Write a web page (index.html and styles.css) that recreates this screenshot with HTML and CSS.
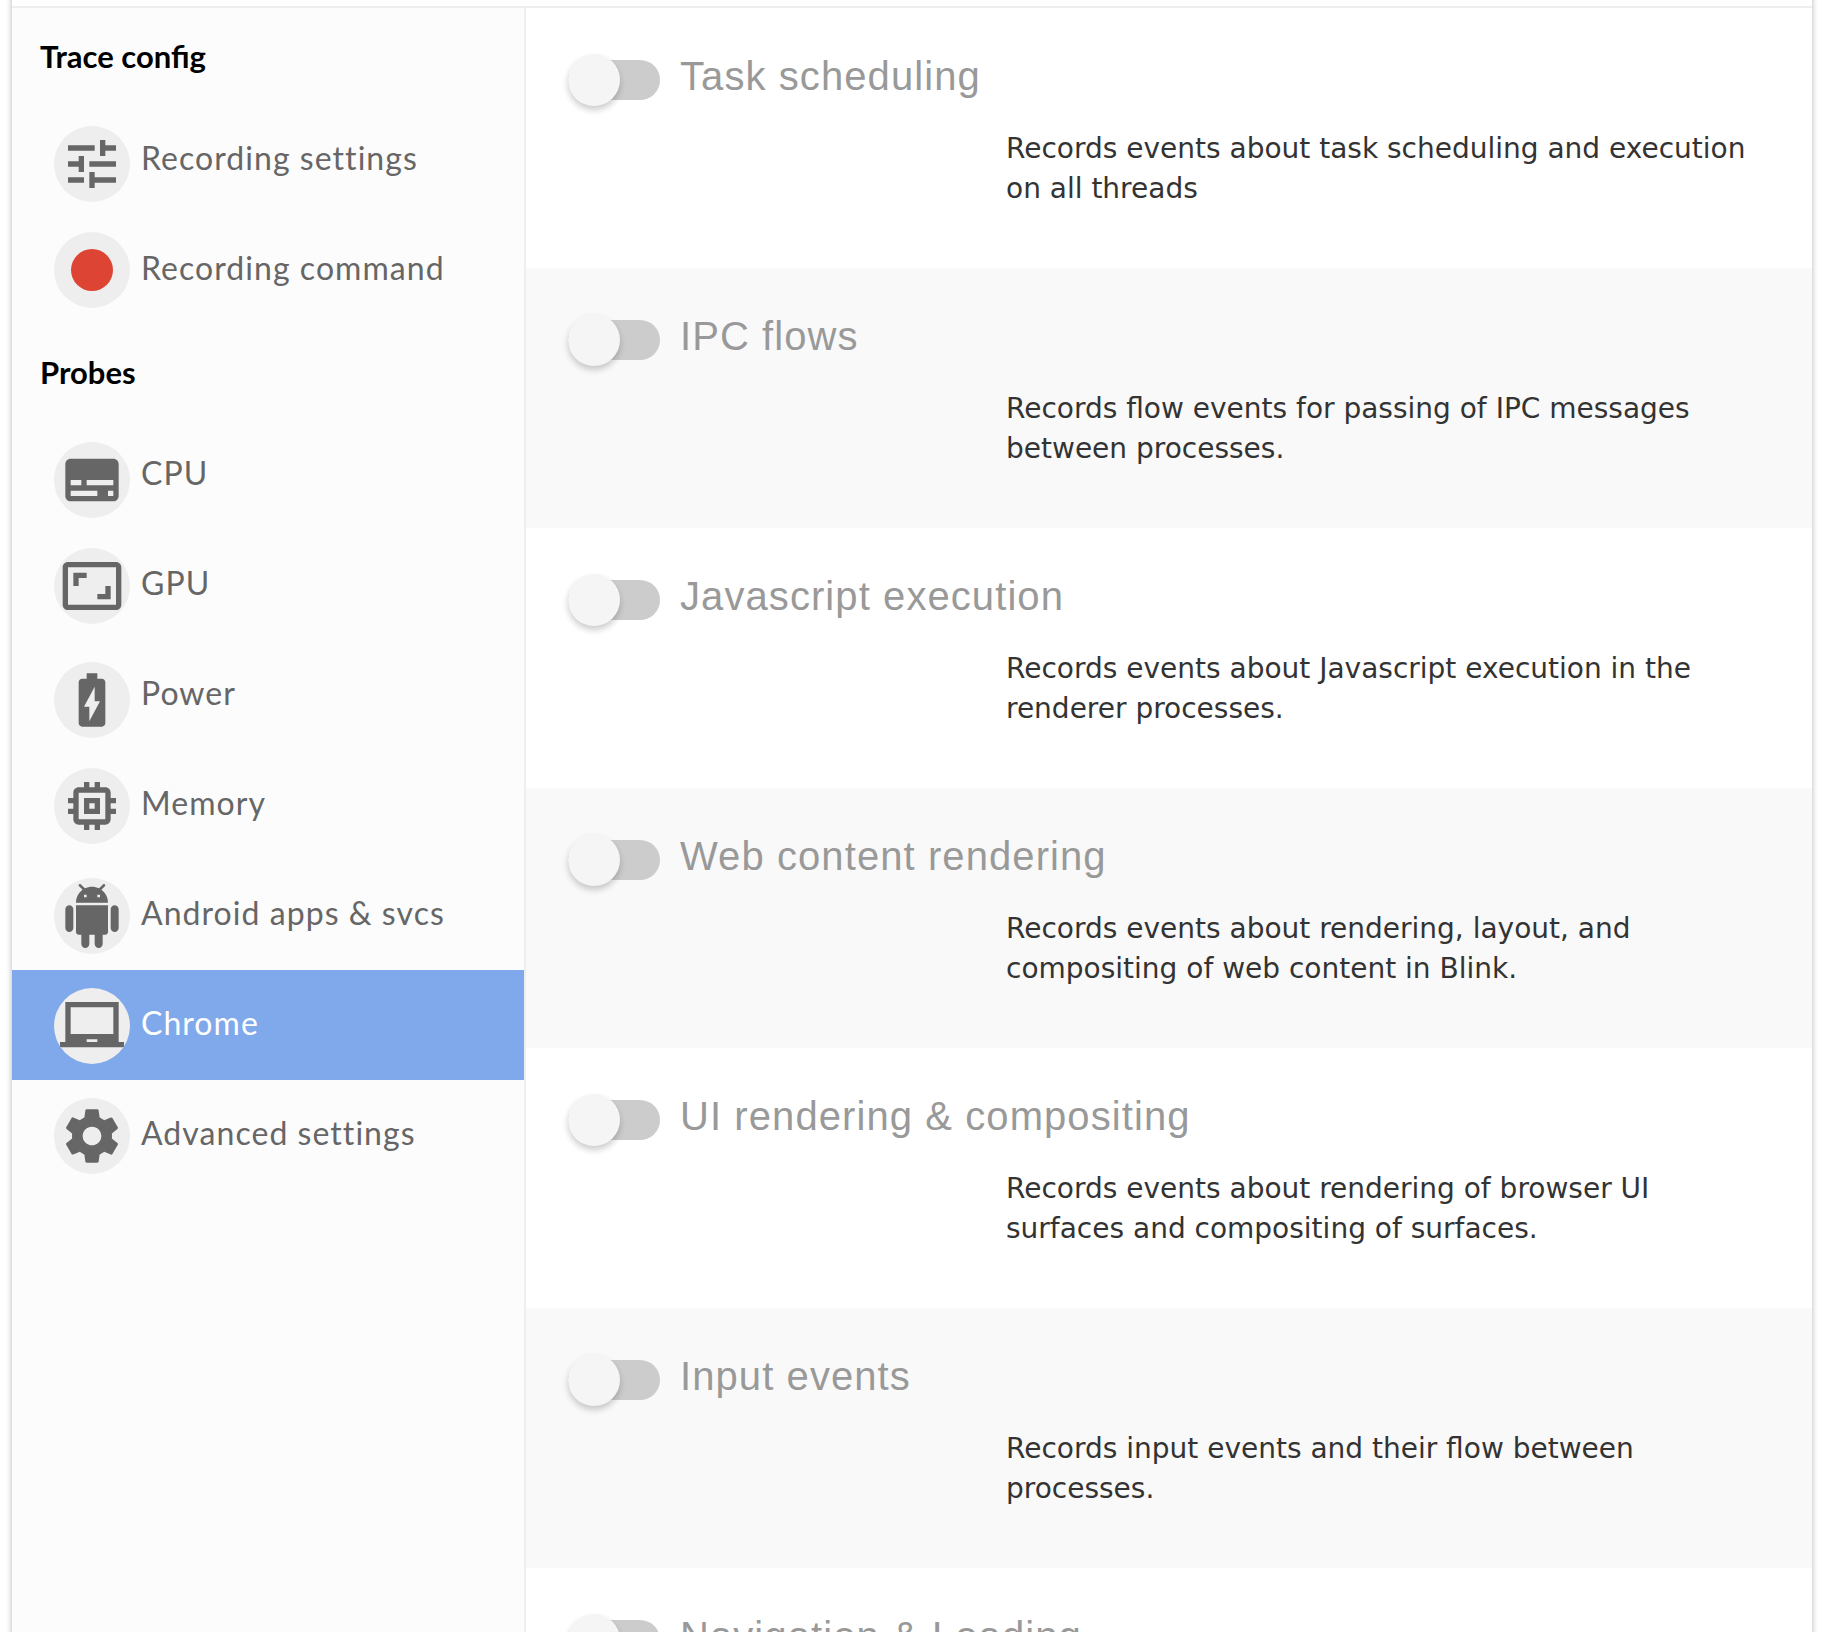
FILE: index.html
```html
<!DOCTYPE html>
<html lang="en">
<head>
<meta charset="utf-8">
<title>Trace config</title>
<link rel="stylesheet" href="styles.css">
</head>
<body>
<div class="page">
<div class="frame">
  <nav class="sidebar">
    <h2 class="heading first">Trace config</h2>
    <a class="item"><span class="badge up-1"><svg viewBox="0 0 24 24"><path d="M3 17v2h6v-2H3zM3 5v2h10V5H3zm10 16v-2h8v-2h-8v-2h-2v6h2zM7 9v2H3v2h4v2h2V9H7zm14 4v-2H11v2h10zm-6-4h2V7h4V5h-4V3h-2v6z"/></svg></span><span class="label">Recording settings</span></a>
    <a class="item"><span class="badge up-2"><span class="rec"></span></span><span class="label">Recording command</span></a>
    <h2 class="heading">Probes</h2>
    <a class="item"><span class="badge"><svg viewBox="0 0 24 24"><path d="M20 4H4c-1.100 0-2 .9-2 2v12c0 1.100.9 2 2 2h16c1.100 0 2-.9 2-2V6c0-1.100-.9-2-2-2zM4 12h4v2H4v-2zm10 6H4v-2h10v2zm6 0h-2v-2h2v2zm0-4H10v-2h10v2z"/></svg></span><span class="label">CPU</span></a>
    <a class="item"><span class="badge up"><svg viewBox="0 0 24 24"><path d="M19 12h-2v3h-3v2h5v-5zM7 9h3V7H5v5h2V9zm14-6H3c-1.100 0-2 .9-2 2v14c0 1.100.9 2 2 2h18c1.100 0 2-.9 2-2V5c0-1.100-.9-2-2-2zm0 16.010H3V4.990h18v14.020z"/></svg></span><span class="label">GPU</span></a>
    <a class="item"><span class="badge"><svg viewBox="0 0 24 24"><path d="M15.670 4H14V2h-4v2H8.330C7.600 4 7 4.600 7 5.330v15.330C7 21.400 7.600 22 8.330 22h7.330c.74 0 1.340-.6 1.340-1.330V5.330C17 4.600 16.400 4 15.670 4zM11 20v-5.500H9L13 7v5.500h2L11 20z"/></svg></span><span class="label">Power</span></a>
    <a class="item"><span class="badge up"><svg viewBox="0 0 24 24"><path d="M15 9H9v6h6V9zm-2 4h-2v-2h2v2zm8-2V9h-2V7c0-1.100-.9-2-2-2h-2V3h-2v2h-2V3H9v2H7c-1.100 0-2 .9-2 2v2H3v2h2v2H3v2h2v2c0 1.100.9 2 2 2h2v2h2v-2h2v2h2v-2h2c1.100 0 2-.9 2-2v-2h2v-2h-2v-2h2zm-4 6H7V7h10v10z"/></svg></span><span class="label">Memory</span></a>
    <a class="item"><span class="badge up"><svg viewBox="0 0 24 24"><path d="M6 18c0 .55.45 1 1 1h1v3.500c0 .83.67 1.500 1.500 1.500s1.500-.67 1.500-1.500V19h2v3.500c0 .83.67 1.500 1.500 1.500s1.500-.67 1.500-1.500V19h1c.55 0 1-.45 1-1V8H6v10zM3.500 8C2.670 8 2 8.670 2 9.500v7c0 .83.67 1.500 1.500 1.500S5 17.330 5 16.500v-7C5 8.670 4.330 8 3.500 8zm17 0c-.83 0-1.500.67-1.500 1.500v7c0 .83.67 1.500 1.500 1.500s1.500-.67 1.500-1.500v-7c0-.83-.67-1.500-1.500-1.500zm-4.970-5.840l1.300-1.300c.2-.2.2-.51 0-.71-.2-.2-.51-.2-.71 0l-1.480 1.480C13.850 1.230 12.950 1 12 1c-.96 0-1.860.23-2.660.63L7.850.15c-.2-.2-.51-.2-.71 0-.2.2-.2.51 0 .71l1.310 1.310C6.970 3.260 6 5.010 6 7h12c0-1.990-.97-3.750-2.470-4.840zM10 5H9V4h1v1zm5 0h-1V4h1v1z"/></svg></span><span class="label">Android apps &amp; svcs</span></a>
    <a class="item active"><span class="badge up"><svg viewBox="0 0 24 24"><path d="M22 18V3H2v15H0v2h24v-2h-2zm-8 0h-4v-1h4v1zm6-3H4V5h16v10z"/></svg></span><span class="label">Chrome</span></a>
    <a class="item"><span class="badge up"><svg viewBox="0 0 24 24"><path d="M19.430 12.980c.04-.32.07-.64.07-.98s-.03-.66-.07-.98l2.110-1.650c.19-.15.24-.42.12-.64l-2-3.460c-.12-.22-.39-.3-.61-.22l-2.490 1c-.52-.4-1.080-.73-1.690-.98l-.38-2.650C14.460 2.180 14.250 2 14 2h-4c-.25 0-.46.18-.49.42l-.38 2.650c-.61.25-1.170.59-1.690.98l-2.490-1c-.23-.09-.49 0-.61.22l-2 3.460c-.13.22-.07.49.12.64l2.110 1.650c-.04.32-.07.65-.07.98s.03.66.07.98l-2.110 1.650c-.19.15-.24.42-.12.64l2 3.460c.12.22.39.3.61.22l2.490-1c.52.4 1.080.73 1.690.98l.38 2.650c.03.24.24.42.49.42h4c.25 0 .46-.18.49-.42l.38-2.650c.61-.25 1.170-.59 1.690-.98l2.490 1c.23.09.49 0 .61-.22l2-3.460c.12-.22.07-.49-.12-.64l-2.110-1.650zM12 15.500c-1.930 0-3.500-1.570-3.500-3.500s1.570-3.500 3.500-3.500 3.500 1.570 3.500 3.500-1.570 3.500-3.500 3.500z"/></svg></span><span class="label">Advanced settings</span></a>
  </nav>
  <main class="main">
    <section class="probe">
      <div class="head"><span class="toggle"><span class="knob"></span></span><span class="title">Task scheduling</span></div>
      <p class="desc">Records events about task scheduling and execution on all threads</p>
    </section>
    <section class="probe">
      <div class="head"><span class="toggle"><span class="knob"></span></span><span class="title">IPC flows</span></div>
      <p class="desc">Records flow events for passing of IPC messages between processes.</p>
    </section>
    <section class="probe">
      <div class="head"><span class="toggle"><span class="knob"></span></span><span class="title">Javascript execution</span></div>
      <p class="desc">Records events about Javascript execution in the renderer processes.</p>
    </section>
    <section class="probe">
      <div class="head"><span class="toggle"><span class="knob"></span></span><span class="title">Web content rendering</span></div>
      <p class="desc">Records events about rendering, layout, and compositing of web content in Blink.</p>
    </section>
    <section class="probe">
      <div class="head"><span class="toggle"><span class="knob"></span></span><span class="title">UI rendering &amp; compositing</span></div>
      <p class="desc">Records events about rendering of browser UI surfaces and compositing of surfaces.</p>
    </section>
    <section class="probe">
      <div class="head"><span class="toggle"><span class="knob"></span></span><span class="title">Input events</span></div>
      <p class="desc">Records input events and their flow between processes.</p>
    </section>
    <section class="probe">
      <div class="head"><span class="toggle"><span class="knob"></span></span><span class="title">Navigation &amp; Loading</span></div>
    </section>
  </main>
</div>
</div>
</body>
</html>
```
FILE: styles.css
```css
* { box-sizing: border-box; }
html, body { margin: 0; height: 100%; overflow: hidden; background: #fff; }
.page {
  width: 1800px;
  height: 1660px;
  margin: -14px 0 0 12px;
  padding-top: 20px;
  background: #fff;
  box-shadow: 0 0 6px rgba(0, 0, 0, .3);
}
.frame {
  display: flex;
  height: 1640px;
  border-top: 2px solid #eee;
  overflow: hidden;
}
.sidebar {
  flex: 0 0 514px;
  background: #fcfcfc;
  border-right: 2px solid #eee;
  padding-top: 28px;
}
.heading {
  margin: 27px 0 28px;
  padding-left: 28px;
  font: 700 31px/40px Lato, sans-serif;
  color: #000;
}
.heading.first { margin: 0 0 29px; }
.item {
  display: flex;
  align-items: flex-start;
  height: 110px;
  padding-left: 42px;
}
.badge {
  flex: none;
  display: flex;
  align-items: center;
  justify-content: center;
  width: 76px;
  height: 76px;
  margin-top: 22px;
  border-radius: 50%;
  background: #eee;
  overflow: hidden;
}
.badge.up { margin-top: 18px; }
.badge.up-1 { margin-top: 21px; }
.badge.up-2 { margin-top: 17px; }
.badge svg { flex: none; width: 64px; height: 64px; fill: #666; }
.rec { width: 42px; height: 42px; border-radius: 50%; background: #dd4433; }
.label {
  margin: 33px 0 0 11px;
  font: 400 32px/40px Lato, sans-serif;
  letter-spacing: 1.05px;
  color: #666;
  white-space: nowrap;
}
.item.active { background: #7fa9eb; }
.item.active .label { color: #fff; }
.main { flex: 1; min-width: 0; }
.probe { height: 260px; padding: 46px 40px 0 42px; }
.probe:nth-child(even) { background: #f9f9f9; }
.head { display: flex; align-items: flex-start; height: 52px; }
.toggle {
  position: relative;
  flex: none;
  width: 92px;
  height: 40px;
  margin-top: 6px;
  border-radius: 20px;
  background: #ccc;
}
.knob {
  position: absolute;
  left: 0;
  top: -6px;
  width: 52px;
  height: 52px;
  border-radius: 50%;
  background: #f5f5f5;
  box-shadow: 0 4px 6px rgba(0, 0, 0, .2);
}
.title {
  margin-left: 20px;
  font: 400 40px/44px "Liberation Sans", sans-serif;
  letter-spacing: 1.08px;
  color: #999;
  white-space: nowrap;
}
.desc {
  width: 760px;
  margin: 23px 0 0 438px;
  font: 400 28px/40px "DejaVu Sans", sans-serif;
  color: #333;
}
```
